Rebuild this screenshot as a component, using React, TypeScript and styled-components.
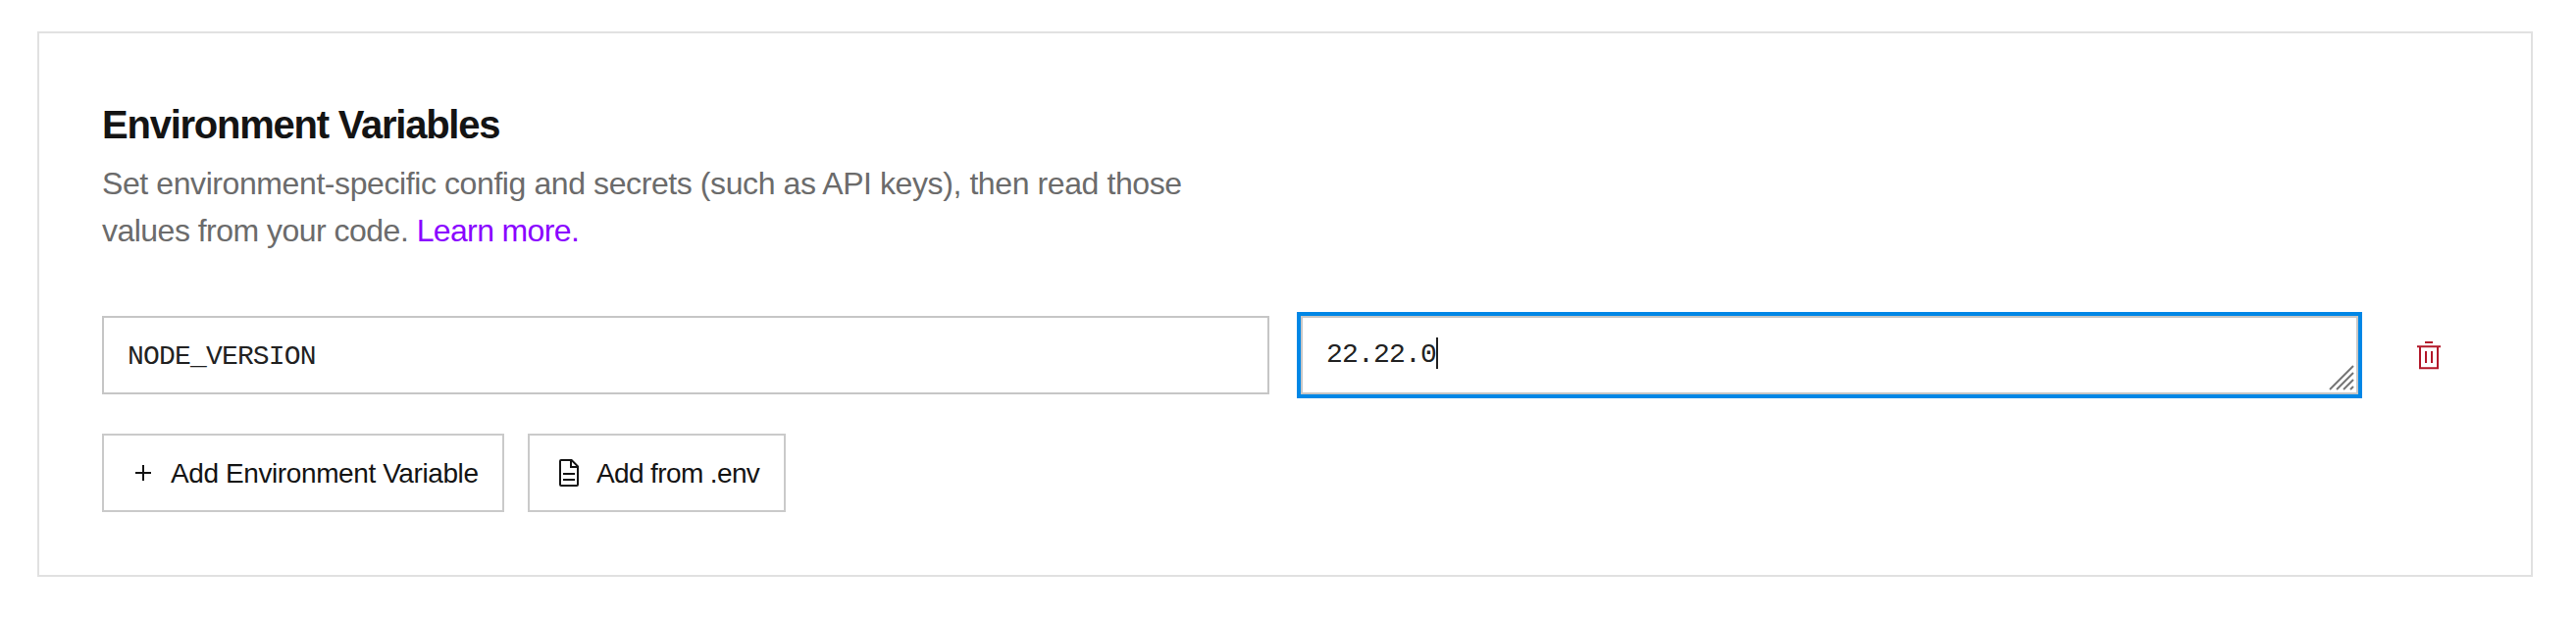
import React, { useState } from "react";
import styled, { createGlobalStyle } from "styled-components";

interface EnvVar {
  key: string;
  value: string;
}

const PlusIcon = () => (
  <svg width="32" height="32" viewBox="0 0 32 32" fill="none" stroke="currentColor" strokeWidth="2">
    <path d="M16 8v16M8 16h16" />
  </svg>
);

const FileIcon = () => (
  <svg width="32" height="32" viewBox="0 0 32 32" fill="none" stroke="currentColor" strokeWidth="2">
    <path d="M8 3h10.6L25 9.4V28a1 1 0 0 1-1 1H8a1 1 0 0 1-1-1V4a1 1 0 0 1 1-1z" />
    <path d="M18 3v7h7" />
    <path d="M10 17h12M10 23h12" />
  </svg>
);

const TrashIcon = () => (
  <svg width="32" height="32" viewBox="0 0 32 32" fill="none" stroke="currentColor" strokeWidth="2">
    <path d="M12 3h8M4 7.3h24M7 7.3v22h18v-22M13 12v12M19 12v12" />
  </svg>
);

const App: React.FC = () => {
  const [envVars, setEnvVars] = useState<EnvVar[]>([
    { key: "NODE_VERSION", value: "22.22.0" },
  ]);

  const handleAdd = () => {
    setEnvVars([...envVars, { key: "", value: "" }]);
  };

  const handleDelete = (index: number) => {
    setEnvVars(envVars.filter((_, i) => i !== index));
  };

  return (
    <>
      <GlobalStyle />
      <Card>
        <Title>Environment Variables</Title>
        <Description>
          <DescriptionLine spacing="-0.41px">
            Set environment-specific config and secrets (such as API keys), then read those
          </DescriptionLine>
          <DescriptionLine spacing="-0.52px">
            values from your code. <LearnMore href="#">Learn more.</LearnMore>
          </DescriptionLine>
        </Description>
        {envVars.map((envVar, index) => (
          <EnvRow key={index}>
            <KeyField>{envVar.key}</KeyField>
            <ValueField focused={index === 0}>
              {envVar.value}
              {index === 0 && <Caret />}
              <ResizeHandle width="26" height="26" viewBox="0 0 26 26">
                <path d="M1 25L25 1M8 25L25 8M15 25L25 15M22 25L25 22" />
              </ResizeHandle>
            </ValueField>
            <DeleteButton aria-label="Delete" onClick={() => handleDelete(index)}>
              <TrashIcon />
            </DeleteButton>
          </EnvRow>
        ))}
        <ButtonRow>
          <Button width={410} onClick={handleAdd}>
            <PlusIcon />
            <ButtonText spacing="-0.4px">Add Environment Variable</ButtonText>
          </Button>
          <Button width={263}>
            <FileIcon />
            <ButtonText spacing="-0.62px">Add from .env</ButtonText>
          </Button>
        </ButtonRow>
      </Card>
    </>
  );
};

const GlobalStyle = createGlobalStyle`
  * {
    box-sizing: border-box;
  }
  body {
    margin: 0;
    background-color: #fff;
    font-family: "Liberation Sans", Arial, sans-serif;
    color: #141414;
  }
`;

const Card = styled.section`
  height: 556px;
  margin: 32px 44px 0 38px;
  padding: 65px 64px 0;
  border: 2px solid #e1e1e1;
`;

const Title = styled.h2`
  margin: 0;
  font-size: 40px;
  line-height: 56px;
  font-weight: bold;
  letter-spacing: -1.24px;
  white-space: nowrap;
`;

const Description = styled.div`
  margin-top: 8px;
  font-size: 32px;
  line-height: 48px;
  color: #6b6b6b;
`;

const DescriptionLine = styled.div<{ spacing: string }>`
  letter-spacing: ${({ spacing }) => spacing};
  white-space: nowrap;
`;

const LearnMore = styled.a`
  color: #8a05ff;
  letter-spacing: -0.64px;
  text-decoration: none;
`;

const EnvRow = styled.div`
  display: flex;
  align-items: center;
  margin-top: 63px;
`;

const KeyField = styled.div`
  width: 1190px;
  height: 80px;
  padding: 0 24px;
  border: 2px solid #c6c6c6;
  font-family: "Liberation Mono", monospace;
  font-size: 28px;
  line-height: 80px;
  letter-spacing: -0.82px;
  color: #222;
`;

const ValueField = styled(KeyField)<{ focused: boolean }>`
  position: relative;
  display: flex;
  width: 1078px;
  margin-left: 32px;
  line-height: 76px;
  outline: ${({ focused }) => (focused ? "4px solid #0087e6" : "none")};
`;

const Caret = styled.span`
  width: 2px;
  height: 32px;
  margin-top: 20px;
  background-color: #222;
`;

const ResizeHandle = styled.svg`
  position: absolute;
  right: 2px;
  bottom: 2px;
  fill: none;
  stroke: #757575;
  stroke-width: 2;
`;

const DeleteButton = styled.button`
  display: flex;
  margin-left: 56px;
  padding: 0;
  border: none;
  background: none;
  color: #b3182a;
`;

const ButtonRow = styled.div`
  display: flex;
  gap: 24px;
  margin-top: 40px;
`;

const Button = styled.button<{ width: number }>`
  display: flex;
  align-items: center;
  width: ${({ width }) => width}px;
  height: 80px;
  padding: 0 0 0 24px;
  border: 2px solid #cacaca;
  background: none;
  font-family: inherit;
  color: #141414;
`;

const ButtonText = styled.span<{ spacing: string }>`
  margin-left: 12px;
  padding-top: 2px;
  font-size: 28px;
  line-height: 40px;
  letter-spacing: ${({ spacing }) => spacing};
  white-space: nowrap;
`;

export default App;
